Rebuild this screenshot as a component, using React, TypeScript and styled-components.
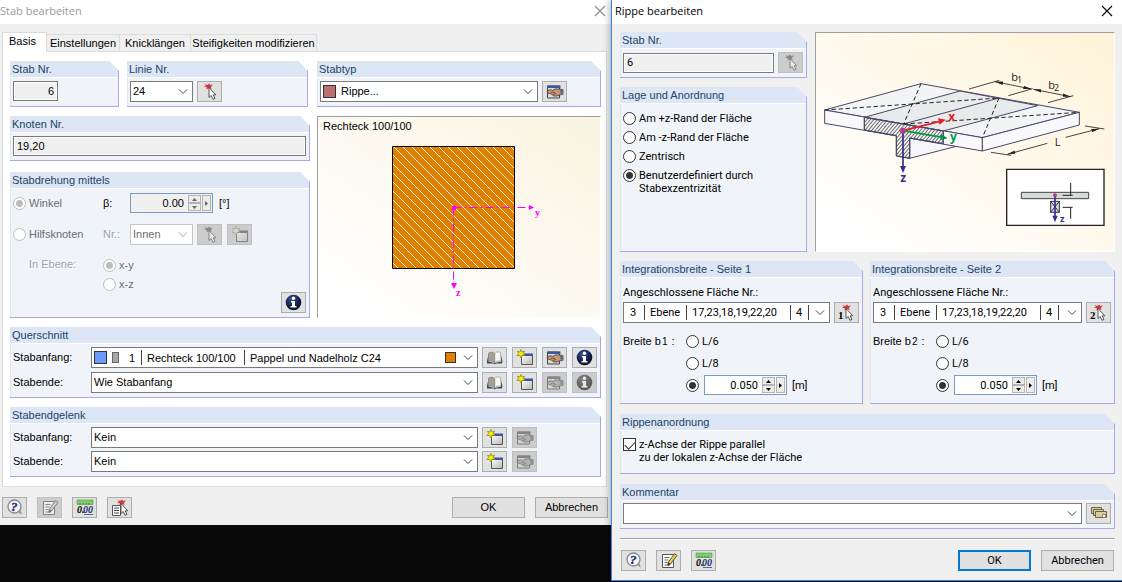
import React from "react";
import styled, { createGlobalStyle, css } from "styled-components";

const sans = `"Liberation Sans", Arial, sans-serif`;
const ui = `Roboto, Tahoma, sans-serif`;

const GlobalStyle = createGlobalStyle`
  * { box-sizing: border-box; }
  body { margin: 0; background: #0a0a0a; font: 11px/13px ${sans}; color: #000; }
  button, input, select { font: inherit; color: inherit; margin: 0; padding: 0; }
  h1, h2 { margin: 0; font: inherit; }
`;

/* ---------- windows ---------- */

const Desktop = styled.main`
  display: grid;
  grid-template-columns: 611fr 511fr;
  align-items: start;
  min-height: 100vh;
  overflow: hidden;
`;

const Window = styled.section<{ $active?: boolean }>`
  background: #f0f0f0;
  min-width: 0;
  ${p => p.$active && css`
    z-index: 1;
    border: solid #2f86dc;
    border-width: 0 0 1px 1px;
    box-shadow: 0 0 8px rgba(0, 0, 0, 0.4);
    font-family: ${ui};
  `}
`;

const TitleBar = styled.header<{ $active?: boolean }>`
  display: flex;
  align-items: center;
  justify-content: space-between;
  height: 24px;
  padding: 0 ${p => (p.$active ? 9 : 5)}px 3px ${p => (p.$active ? 3 : 0)}px;
  background: #fff;
  color: ${p => (p.$active ? "#000" : "#999")};
  font-family: "Open Sans", "Noto Sans", sans-serif;
`;

const CloseButton = styled.button`
  display: flex;
  border: 0;
  background: none;
`;

const Tabs = styled.nav`
  display: flex;
  align-items: flex-end;
  height: 27px;
  padding-left: 2px;
`;

const Tab = styled.button<{ $w: number; $current?: boolean }>`
  width: ${p => p.$w}px;
  height: 17px;
  border: 1px solid #dcdcdc;
  border-width: 1px 1px 0 0;
  background: #f0f0f0;
  white-space: nowrap;
  ${p => p.$current && css`
    height: 20px;
    margin-bottom: -1px;
    padding: 0 6px 2px;
    text-align: left;
    border-left-width: 1px;
    background: #fff;
  `}
`;

const TabPage = styled.div`
  margin: 0 4px 0 2px;
  padding: 9px 5px 9px 7px;
  border: 1px solid #dcdcdc;
  background: #fff;
  display: flex;
  flex-direction: column;
  gap: 9px;
`;

const Split = styled.div`
  display: grid;
  grid-template-columns: 300px 1fr;
  gap: 9px 7px;
`;

const Pair = styled.div`
  display: grid;
  grid-template-columns: 109fr 181fr;
  gap: 8px;
  padding-right: 2px;
`;

const Stack = styled.div<{ $gap?: number }>`
  display: flex;
  flex-direction: column;
  gap: ${p => p.$gap ?? 9}px;
  min-width: 0;
`;

const DialogBody = styled.div`
  display: flex;
  flex-direction: column;
  gap: 9px;
  padding: 8px 7px 9px 8px;
`;

const TopArea = styled.div`
  display: grid;
  grid-template-columns: 187px 1fr;
  gap: 8px;
`;

const Halves = styled.div`
  display: grid;
  grid-template-columns: 243fr 245fr;
  gap: 7px;
`;

const Footer = styled.footer<{ $ruled?: boolean }>`
  display: flex;
  gap: 10px;
  padding: 10px 3px 7px 2px;
  ${p => p.$ruled && css`
    padding: 11px 1px 0;
    border-top: 1px solid #a0a0a0;
    box-shadow: inset 0 1px #fff;
  `}
`;

const Push = styled.div`
  flex: 1;
`;

/* ---------- group boxes ---------- */

const GroupBox = styled.section<{ $fill?: boolean }>`
  display: flex;
  flex-direction: column;
  flex: ${p => (p.$fill ? 1 : "none")};
  min-width: 0;
  background: #f0f4f9;
  border: solid #a8a8ec;
  border-width: 0 1px 1px 0;
  clip-path: polygon(0 0, calc(100% - 10px) 0, 100% 10px, 100% 100%, 0 100%);
`;

const GroupTitle = styled.h2`
  height: 17px;
  padding: 2px 0 0 2px;
  background: #dce6f4;
  border-bottom: 1px solid #fff;
  color: #1e4468;
  font: 11px/13px ${sans};
`;

const GroupBody = styled.div<{ $top?: number; $gap?: number; $bottom?: number }>`
  flex: 1;
  display: flex;
  flex-direction: column;
  gap: ${p => p.$gap ?? 4}px;
  padding: ${p => p.$top ?? 3}px 3px ${p => p.$bottom ?? 4}px 2px;
  border-left: 1px solid #dce6f4;
`;

function Group(p: { title: string; top?: number; gap?: number; bottom?: number; fill?: boolean; children: React.ReactNode }) {
  return (
    <GroupBox $fill={p.fill}>
      <GroupTitle>{p.title}</GroupTitle>
      <GroupBody $top={p.top} $gap={p.gap} $bottom={p.bottom}>{p.children}</GroupBody>
    </GroupBox>
  );
}

/* ---------- controls ---------- */

const Row = styled.div<{ $gap?: number }>`
  display: flex;
  align-items: center;
  gap: ${p => p.$gap ?? 4}px;
  min-width: 0;
`;

const FieldLabel = styled.label<{ $w: number; $dim?: boolean }>`
  flex: none;
  width: ${p => p.$w}px;
  color: ${p => (p.$dim ? "#a0a0a0" : "#000")};
  text-shadow: ${p => (p.$dim ? "1px 1px #fff" : "none")};
`;

const Legend = styled.span`
  flex: none;
  font-family: ${sans};
`;

const PlaneLegend = styled.span`
  align-self: start;
  padding: 2px 0 0 16px;
  color: #a0a0a0;
  text-shadow: 1px 1px #fff;
`;

const Subscript = styled.small`
  font-size: 10px;
  margin: 0 1px;
`;

const TextField = styled.input<{ $w?: number; $right?: boolean }>`
  ${p => (p.$w ? `width: ${p.$w}px;` : "flex: 1; min-width: 0;")}
  height: 20px;
  padding: 0 3px;
  border: 1px solid #7a7a7a;
  border-radius: 0;
  background: #f0f0f0;
  box-shadow: inset 0 0 0 1px #fff;
  text-align: ${p => (p.$right ? "right" : "left")};
`;

const ComboFrame = styled.div<{ $w?: number; $off?: boolean }>`
  position: relative;
  display: flex;
  align-items: center;
  ${p => (p.$w ? `flex: none; width: ${p.$w}px;` : "flex: 1; min-width: 0;")}
  height: 21px;
  padding: 0 2px;
  border: 1px solid ${p => (p.$off ? "#c6c6c6" : "#7a7a7a")};
  background: #fff;
  color: ${p => (p.$off ? "#6d6d6d" : "#000")};
`;

const SelectField = styled.select`
  flex: 1;
  min-width: 0;
  width: 100%;
  height: 19px;
  border: 0;
  outline: 0;
  appearance: none;
  background: none;
  opacity: 1;
`;

const CoverSelect = styled.select`
  position: absolute;
  inset: 0;
  width: 100%;
  opacity: 0;
`;

const ChevronIcon = styled.svg`
  flex: none;
  width: 12px;
  height: 6px;
  margin: 0 1px 0 auto;
`;

const Swatch = styled.span<{ $color: string; $w?: number; $h?: number; $border?: string; $gap?: number }>`
  flex: none;
  width: ${p => p.$w ?? 13}px;
  height: ${p => p.$h ?? 13}px;
  border: 1px solid ${p => p.$border ?? "#333"};
  background: ${p => p.$color};
  margin-right: ${p => p.$gap ?? 5}px;
`;

const Cell = styled.span<{ $w: number; $last?: boolean; $pad?: number }>`
  flex: none;
  width: ${p => p.$w}px;
  height: 15px;
  line-height: 16px;
  padding-left: ${p => p.$pad ?? 5}px;
  white-space: nowrap;
  border-right: ${p => (p.$last ? 0 : "1px solid #444")};
`;

const Chevron = ({ off }: { off?: boolean }) => (
  <ChevronIcon viewBox="0 0 12 6" aria-hidden="true">
    <path d="M2 .5 6 4.500 10 .5" fill="none" stroke={off ? "#a0a0a0" : "#444"} />
  </ChevronIcon>
);

function Combo(p: { id: string; label: string; value: string; w?: number; off?: boolean; lead?: React.ReactNode }) {
  return (
    <ComboFrame $w={p.w} $off={p.off}>
      {p.lead}
      <SelectField id={p.id} aria-label={p.label} disabled={p.off}>
        <option>{p.value}</option>
      </SelectField>
      <Chevron off={p.off} />
    </ComboFrame>
  );
}

function ColumnCombo(p: { id: string; label: string; value: string; children: React.ReactNode }) {
  return (
    <ComboFrame>
      {p.children}
      <Chevron />
      <CoverSelect id={p.id} aria-label={p.label}>
        <option value={p.value} label={p.value} />
      </CoverSelect>
    </ComboFrame>
  );
}

const Choice = styled.label<{ $off?: boolean }>`
  display: flex;
  align-items: flex-start;
  flex: none;
  gap: 3px;
  color: ${p => (p.$off ? "#6d6d6d" : "#000")};
`;

const Radio = styled.input.attrs({ type: "radio" })`
  appearance: none;
  flex: none;
  width: 13px;
  height: 13px;
  border: 1px solid #333;
  border-radius: 50%;
  background: #fff;
  &:checked { background: radial-gradient(circle, #333 3px, #fff 4px); }
  &:disabled { border-color: #bcbcbc; }
  &:disabled:checked { background: radial-gradient(circle, #bcbcbc 3px, #fff 4px); }
`;

const Check = styled.input.attrs({ type: "checkbox" })`
  appearance: none;
  flex: none;
  display: grid;
  width: 13px;
  height: 13px;
  border: 1px solid #333;
  background: #fff;
  &:checked::before {
    content: "";
    width: 9px;
    height: 5px;
    margin: 2px 1px;
    border: solid #333;
    border-width: 0 0 1px 1px;
    transform: rotate(-45deg);
  }
`;

const IconButton = styled.button`
  flex: none;
  display: flex;
  align-items: center;
  justify-content: center;
  width: 25px;
  height: 21px;
  border: 1px solid #adadad;
  background: #e1e1e1;
  &:disabled { background: #ccc; border-color: #bfbfbf; }
  &:disabled svg { filter: grayscale(1); opacity: 0.6; }
`;

const PushButton = styled.button<{ $primary?: boolean }>`
  width: 73px;
  height: 21px;
  border: ${p => (p.$primary ? "2px solid #0078d7" : "1px solid #adadad")};
  background: #e1e1e1;
`;

const SpinFrame = styled.div<{ $w: number; $off?: boolean }>`
  flex: none;
  display: flex;
  align-items: stretch;
  width: ${p => p.$w}px;
  height: 20px;
  padding: 1px 0;
  border: 1px solid #7a9cc0;
  background: ${p => (p.$off ? "#f0f0f0" : "#fff")};
`;

const SpinInput = styled.input`
  flex: 1;
  min-width: 0;
  border: 0;
  outline: 0;
  padding-right: 4px;
  background: none;
  text-align: right;
`;

const SpinButtons = styled.div`
  display: grid;
  grid-template-rows: 1fr 1fr;
  width: 13px;
`;

const SpinButton = styled.button<{ $tall?: boolean }>`
  display: flex;
  align-items: center;
  justify-content: center;
  width: ${p => (p.$tall ? 9 : 13)}px;
  margin: 0 ${p => (p.$tall ? 1 : 0)}px;
  border: 1px solid #b4b4b4;
  background: #ececec;
`;

function Spin(p: { label: string; value: string; w: number; off?: boolean }) {
  const c = p.off ? "#666" : "#000";
  return (
    <SpinFrame $w={p.w} $off={p.off}>
      <SpinInput aria-label={p.label} defaultValue={p.value} />
      <SpinButtons>
        <SpinButton aria-label="Erhöhen"><svg width="5" height="3" viewBox="0 0 5 3"><path d="M0 3 2.5 0 5 3z" fill={c} /></svg></SpinButton>
        <SpinButton aria-label="Verringern"><svg width="5" height="3" viewBox="0 0 5 3"><path d="M0 0 2.5 3 5 0z" fill={c} /></svg></SpinButton>
      </SpinButtons>
      <SpinButton $tall aria-label="Mehr"><svg width="3" height="5" viewBox="0 0 3 5"><path d="M0 0 3 2.5 0 5z" fill={c} /></svg></SpinButton>
    </SpinFrame>
  );
}

const Actions = styled.div<{ $short?: boolean }>`
  display: flex;
  gap: 5px;
  width: ${p => (p.$short ? 55 : 115)}px;
  flex: none;
`;

const AngleGrid = styled.div`
  display: grid;
  grid-template-columns: 90px 27px 1fr;
  grid-template-rows: 20px 21px 35px;
  row-gap: 11px;
  align-items: center;
  margin-top: 1px;
`;

const PlaneChoices = styled.div`
  grid-column: 2 / 4;
  align-self: end;
  display: flex;
  flex-direction: column;
  gap: 6px;
`;

const BottomRight = styled.div`
  display: flex;
  justify-content: flex-end;
  margin-top: -3px;
`;

const WidthGrid = styled.div`
  display: grid;
  grid-template-columns: 63px 1fr;
  row-gap: 2px;
  align-items: center;
  margin-top: 5px;
`;

const WidthCell = styled.div`
  grid-column: 2;
  display: flex;
  align-items: center;
  gap: 5px;
  height: 20px;
`;

/* ---------- icons ---------- */

const Cross = ({ color }: { color: string }) => (
  <svg width="12" height="12" viewBox="0 0 12 12"><path d="M1 1 11 11M11 1 1 11" stroke={color} strokeWidth="1.1" /></svg>
);

const Arrow = () => (
  <path d="M7 3.500v10l2.200-2 1.800 3.800 2-.9-1.800-3.600h2.600z" fill="#fff" stroke="#444" strokeWidth=".9" />
);

const Star = () => (
  <path d="M2 .8 5 2 7.500.6 8 2 11 1.600 9 3.800 9.500 6 7 5 4.500 6.600 4.800 4.200 2 3.600 4 2.600z" fill="#cf3a3a" />
);

const PickIcon = ({ mark }: { mark?: string }) => (
  <svg width="18" height="18" viewBox="0 0 18 18">
    <g transform={mark ? "translate(2 0)" : "translate(1 0)"}><Star /></g>
    <g transform="translate(1 1)"><Arrow /></g>
    {mark && <text x="0" y="15" fontFamily="Liberation Serif" fontWeight="700" fontSize="11">{mark}</text>}
  </svg>
);

const ListPickIcon = () => (
  <svg width="18" height="18" viewBox="0 0 18 18">
    <path d="M1.500 6.500h8v10h-8z" fill="#fff" stroke="#555" />
    <path d="M3 9h5M3 11.500h5M3 14h5" stroke="#444" />
    <g transform="translate(4 0)"><Star /></g>
    <g transform="translate(3 1)"><Arrow /></g>
  </svg>
);

const EditIcon = () => (
  <svg width="18" height="16" viewBox="0 0 18 16">
    <path d="M1.500 2h12v12h-12z" fill="#dcdcdc" stroke="#444" />
    <path d="M1.500 1.500h13v2.500h-13z" fill="#3c56a4" />
    <path d="M1.500 7c2-1.500 3.500-1.500 5-.5L9 5h4l4 .5v5l-3 .3-3 1.200H7.500L5.500 10 3 9.500 1 8z" fill="#c89878" stroke="#4a3428" strokeWidth=".8" />
    <path d="M13.500 5H17v6h-2z" fill="#6a6a78" />
    <path d="M5 8.500 8 8l1.500 1.500M7 10.500 10 9.500" stroke="#5a3c2c" strokeWidth=".8" fill="none" />
  </svg>
);

const NewIcon = () => (
  <svg width="18" height="17" viewBox="0 0 18 17">
    <defs><linearGradient id="win" x1="0" y1="0" x2="1" y2="1"><stop offset="0" stopColor="#fff" /><stop offset="1" stopColor="#b8b8b8" /></linearGradient></defs>
    <path d="M5.500 5.500h11v10h-11z" fill="url(#win)" stroke="#555" />
    <path d="M5 4.500h12v2.500H5z" fill="#3a54a8" />
    <path d="M5 .5 6 3l2.500-.8L7.500 4.500 9 6.500l-2.800-.2L5 9 3.800 6.300 1 6.500l1.500-2L1.500 2.200 4 3z" fill="#f6f000" stroke="#857f10" strokeWidth=".7" />
  </svg>
);

const BookIcon = () => (
  <svg width="18" height="16" viewBox="0 0 18 16">
    <path d="M1 11 2.500 4v7.500L8.800 13l6.200-1.500L14.500 4 16.500 11 16 13.500H9.700l-.9 1-.9-1H1z" fill="#3d4660" />
    <path d="M2.500 11.500V3C5 1.500 7 2 8.800 3.500v9C6.500 10.800 4 10.500 2.500 11.500z" fill="#a89e98" stroke="#77706c" strokeWidth=".5" />
    <path d="M8.800 3.500c1.200-2 3.500-2 5.700-1l.7 9c-2-1-4.200-.8-6.400 1z" fill="#f8f7f4" stroke="#777" strokeWidth=".5" />
  </svg>
);

const InfoIcon = () => (
  <svg width="17" height="17" viewBox="0 0 17 17">
    <defs><radialGradient id="ball" cx=".4" cy=".3" r=".8"><stop offset="0" stopColor="#3e5590" /><stop offset=".6" stopColor="#101c48" /><stop offset="1" stopColor="#05091c" /></radialGradient></defs>
    <circle cx="8.500" cy="8.500" r="7.800" fill="url(#ball)" />
    <circle cx="8.500" cy="4.300" r="1.700" fill="#fff" />
    <path d="M6 7h4v5h1.500v1.500H5.500V12H7V8.500H6z" fill="#fff" />
  </svg>
);

const HelpIcon = () => (
  <svg width="18" height="17" viewBox="0 0 18 17">
    <circle cx="8.500" cy="7.500" r="6.500" fill="#f4f4f8" stroke="#85858e" strokeWidth="1.300" />
    <path d="M11 13 16 15.500 14 10z" fill="#999" />
    <text x="5" y="12" fontFamily="Liberation Serif" fontStyle="italic" fontWeight="700" fontSize="13" fill="#1f3470" stroke="#1f3470" strokeWidth=".4">?</text>
  </svg>
);

const NoteIcon = () => (
  <svg width="18" height="17" viewBox="0 0 18 17">
    <path d="M2.500 2.500h11v13h-11z" fill="#fff" stroke="#555" />
    <path d="M4.500 5.500h5M4.500 8h4M4.500 10.500h3M4.500 13h5" stroke="#666" />
    <path d="M14.500 1.500 17 3.500 10.500 12 8 13.500 8.300 10.300z" fill="#f0cc3c" stroke="#333" strokeWidth=".8" />
    <path d="M8.300 10.300 8 13.500 10.500 12z" fill="#222" />
  </svg>
);

const UnitsIcon = () => (
  <svg width="18" height="17" viewBox="0 0 18 17">
    <path d="M1 1h16v4.500H1z" fill="#7ccc6c" stroke="#4c9c44" strokeWidth=".6" />
    <path d="M4 5.500V4M7 5.500V4M10 5.500V4M13 5.500V4" stroke="#2c6c28" strokeWidth=".8" />
    <text x="1" y="14" fontFamily="Liberation Serif" fontStyle="italic" fontWeight="700" fontSize="10">0.</text>
    <text x="7" y="14" fontFamily="Liberation Serif" fontStyle="italic" fontWeight="700" fontSize="10" fill="#20306c">00</text>
    <path d="M8 15.500h9" stroke="#20306c" strokeWidth=".7" />
  </svg>
);

const CopiesIcon = () => (
  <svg width="18" height="15" viewBox="0 0 18 15" fill="#d8cc9c" stroke="#6c6444">
    <path d="M1.500 1.500h10v6h-10z" /><path d="M3.500 3.500h10v6h-10z" /><path d="M5.500 5.500h11v6h-11z" />
    <path d="M12.500 8.500h3v3h-3z" fill="#fff" strokeWidth=".7" />
  </svg>
);

/* ---------- drawings ---------- */

const Canvas = styled.figure<{ $to: string }>`
  margin: 0;
  min-width: 0;
  border: 1px solid;
  border-color: #a0a0a0 #fff #fff #a0a0a0;
  background: linear-gradient(to top right, #fff 10%, ${p => p.$to});
  svg { display: block; width: 100%; height: 100%; }
`;

const CrossSection = () => (
  <svg viewBox="0 0 282 200" preserveAspectRatio="xMinYMin meet" role="img" aria-label="Querschnitt Rechteck 100/100">
    <defs>
      <pattern id="hatch" width="9" height="9" patternUnits="userSpaceOnUse" x="1">
        <path d="M-1-1 10 10M-1 8 1 10M8-1 10 1" stroke="#fff3e0" />
      </pattern>
    </defs>
    <text x="5" y="13" fontFamily="Liberation Sans" fontSize="11">Rechteck 100/100</text>
    <path d="M74.500 29.500h122v122h-122z" fill="#e08000" />
    <path d="M74.500 29.500h122v122h-122z" fill="url(#hatch)" stroke="#000" />
    <g stroke="#f0f" fill="none" strokeDasharray="8 3 2 3"><path d="M135.500 90.500h77" /><path d="M135.500 90.500v76" /></g>
    <g fill="#f0f"><path d="M134 89h4v4h-4zM211 88l5 2.500-5 2.500zM133 166h6l-3 6z" />
      <text x="217" y="99" fontFamily="Liberation Serif" fontWeight="700" fontSize="10">y</text>
      <text x="138" y="179" fontFamily="Liberation Serif" fontWeight="700" fontSize="10">z</text>
    </g>
  </svg>
);

const RibDrawing = () => (
  <svg viewBox="18 99 894 651" preserveAspectRatio="xMinYMin meet" fill="none" strokeWidth="3" role="img" aria-label="Rippe mit mitwirkender Plattenbreite">
    <defs>
      <pattern id="cut" width="8" height="8" patternUnits="userSpaceOnUse" patternTransform="rotate(40)"><path d="M1 0v8" stroke="#222" strokeWidth="2" /></pattern>
      <marker id="tip" viewBox="0 0 24 12" refX="24" refY="6" markerUnits="userSpaceOnUse" markerWidth="24" markerHeight="12" orient="auto-start-reverse"><path d="M0 1 24 6 0 11z" fill="#222" /></marker>
    </defs>
    <g stroke="#4c4668">
      <path d="M299 410V475L435 440 400 420z" fill="#f6f6fa" />
      <path d="M44 330 333 251 808 337 517 413z" fill="#f3f4f6" />
      <path d="M163 352 450 273 683 317 400 393z" fill="#e8ebeb" />
      <path d="M281 372 567 294" />
      <path d="M44 330 517 413V453L44 370z" fill="#f9f9fc" />
      <path d="M517 413 808 337V375L517 453z" fill="#f9f9fc" />
      <path d="M163 352 400 393V431L299 414V475L259 468V407L163 390z" fill="#f0f0f0" />
      <path d="M163 352 400 393V431L299 414V475L259 468V407L163 390z" fill="url(#cut)" />
    </g>
    <path d="M44 330 567 294M333 251 281 372M281 372 808 337M567 294 517 413" stroke="#222" strokeDasharray="13 8" />
    <g stroke="#222" strokeWidth="2.500">
      <path d="M477 267 568 241M595 287 668 266M714 308 790 287M543 457 604 466M825 378 883 387" />
      <path d="M555 245 664 267" markerStart="url(#tip)" markerEnd="url(#tip)" />
      <path d="M670 268 782 290" markerStart="url(#tip)" markerEnd="url(#tip)" />
      <path d="M592 463 712 430" markerStart="url(#tip)" />
      <path d="M767 412 868 386" markerEnd="url(#tip)" />
    </g>
    <g fill="#222" fontFamily="Open Sans" fontSize="33">
      <text x="604" y="243">b</text><text x="621" y="249" fontSize="27">1</text>
      <text x="715" y="266">b</text><text x="732" y="272" fontSize="27">2</text>
      <text x="734" y="438">L</text>
    </g>
    <g strokeWidth="5">
      <path d="M279 392 390 364" stroke="#e81c24" /><path d="M384 355 407 359 389 374z" fill="#e81c24" />
      <path d="M279 392 398 412" stroke="#009848" /><path d="M393 402 413 415 391 421z" fill="#009848" />
      <path d="M279 392V502" stroke="#382c90" /><path d="M270 498H288L279 519z" fill="#382c90" />
    </g>
    <circle cx="279" cy="392" r="9" fill="#b83c88" />
    <g fontFamily="Open Sans" fontWeight="700" fontSize="36">
      <text x="415" y="362" fill="#e81c24">x</text><text x="420" y="423" fill="#009848">y</text><text x="271" y="546" fill="#382c90">z</text>
    </g>
    <path d="M590 508H882V676H590z" fill="#fff" stroke="#222" strokeWidth="4" />
    <path d="M634 577H836V596H634z" fill="#d6dada" stroke="#444" />
    <path d="M722 604H748V637H722zL748 637M748 604 722 637" fill="#d6dada" stroke="#333" />
    <path d="M782 549V586M758 586H788M758 622H788M782 622V656" stroke="#222" />
    <path d="M735 586V650" stroke="#382c90" strokeWidth="5" /><path d="M727 647H743L735 667z" fill="#382c90" />
    <circle cx="735" cy="586" r="6" fill="#b83c88" />
    <text x="750" y="665" fill="#382c90" fontFamily="Open Sans" fontWeight="700" fontSize="28">z</text>
  </svg>
);

/* ---------- dialogs ---------- */

function MemberDialog() {
  return (
    <Window>
      <TitleBar><h1>Stab bearbeiten</h1><CloseButton aria-label="Schließen"><Cross color="#8c8c8c" /></CloseButton></TitleBar>
      <Tabs>
        <Tab $w={45} $current>Basis</Tab><Tab $w={73}>Einstellungen</Tab><Tab $w={71}>Knicklängen</Tab><Tab $w={126}>Steifigkeiten modifizieren</Tab>
      </Tabs>
      <TabPage>
        <Split>
          <Pair>
            <Group title="Stab Nr."><Row><TextField aria-label="Stab Nr." $w={45} $right readOnly value="6" /></Row></Group>
            <Group title="Linie Nr.">
              <Row><Combo id="line" label="Linie Nr." value="24" w={63} /><IconButton aria-label="Linie wählen"><PickIcon /></IconButton></Row>
            </Group>
          </Pair>
          <Group title="Stabtyp">
            <Row>
              <Combo id="type" label="Stabtyp" value="Rippe..." lead={<Swatch $color="#bc7070" />} />
              <Actions $short><IconButton aria-label="Stabtyp bearbeiten"><EditIcon /></IconButton></Actions>
            </Row>
          </Group>
          <Stack $gap={11}>
            <Group title="Knoten Nr."><Row><TextField aria-label="Knoten Nr." readOnly value="19,20" /></Row></Group>
            <Group title="Stabdrehung mittels">
              <AngleGrid>
                <Choice $off><Radio name="rot" disabled defaultChecked />Winkel</Choice>
                <Legend>β:</Legend>
                <Row $gap={6}><Spin label="β" value="0.00" w={83} off /><Legend>[°]</Legend></Row>
                <Choice $off><Radio name="rot" disabled />Hilfsknoten</Choice>
                <FieldLabel $w={27} $dim htmlFor="aux">Nr.:</FieldLabel>
                <Row>
                  <Combo id="aux" label="Nr." value="Innen" w={63} off />
                  <Row $gap={5}>
                    <IconButton disabled aria-label="Knoten wählen"><PickIcon /></IconButton>
                    <IconButton disabled aria-label="Neuer Knoten"><NewIcon /></IconButton>
                  </Row>
                </Row>
                <PlaneLegend>In Ebene:</PlaneLegend>
                <PlaneChoices>
                  <Choice $off><Radio name="plane" disabled defaultChecked />x-y</Choice>
                  <Choice $off><Radio name="plane" disabled />x-z</Choice>
                </PlaneChoices>
              </AngleGrid>
              <BottomRight><IconButton aria-label="Info"><InfoIcon /></IconButton></BottomRight>
            </Group>
          </Stack>
          <Canvas $to="#faf3e0"><CrossSection /></Canvas>
        </Split>

        <Group title="Querschnitt">
          <Row>
            <FieldLabel $w={74} htmlFor="cs-start">Stabanfang:</FieldLabel>
            <ColumnCombo id="cs-start" label="Querschnitt Stabanfang" value="1">
              <Swatch $color="#6a9cff" /><Swatch $color="#a8a8a8" $border="#666" $w={7} $h={11} />
              <Cell $w={18}>1</Cell><Cell $w={103}>Rechteck 100/100</Cell><Cell $w={150} $last>Pappel und Nadelholz C24</Cell>
              <Push />
              <Swatch $color="#e08000" $w={11} $h={11} $gap={6} />
            </ColumnCombo>
            <Actions>
              <IconButton aria-label="Bibliothek"><BookIcon /></IconButton>
              <IconButton aria-label="Neu"><NewIcon /></IconButton>
              <IconButton aria-label="Bearbeiten"><EditIcon /></IconButton>
              <IconButton aria-label="Info"><InfoIcon /></IconButton>
            </Actions>
          </Row>
          <Row>
            <FieldLabel $w={74} htmlFor="cs-end">Stabende:</FieldLabel>
            <Combo id="cs-end" label="Querschnitt Stabende" value="Wie Stabanfang" />
            <Actions>
              <IconButton aria-label="Bibliothek"><BookIcon /></IconButton>
              <IconButton aria-label="Neu"><NewIcon /></IconButton>
              <IconButton disabled aria-label="Bearbeiten"><EditIcon /></IconButton>
              <IconButton disabled aria-label="Info"><InfoIcon /></IconButton>
            </Actions>
          </Row>
        </Group>

        <Group title="Stabendgelenk" gap={3}>
          {[["hinge-start", "Stabanfang:"], ["hinge-end", "Stabende:"]].map(([id, text]) => (
            <Row key={id}>
              <FieldLabel $w={74} htmlFor={id}>{text}</FieldLabel>
              <Combo id={id} label={text} value="Kein" />
              <Actions>
                <IconButton aria-label="Neu"><NewIcon /></IconButton>
                <IconButton disabled aria-label="Bearbeiten"><EditIcon /></IconButton>
              </Actions>
            </Row>
          ))}
        </Group>
      </TabPage>
      <Footer>
        <IconButton aria-label="Hilfe"><HelpIcon /></IconButton>
        <IconButton disabled aria-label="Kommentar"><NoteIcon /></IconButton>
        <IconButton aria-label="Einheiten"><UnitsIcon /></IconButton>
        <IconButton aria-label="Übernehmen"><ListPickIcon /></IconButton>
        <Push />
        <PushButton>OK</PushButton>
        <PushButton>Abbrechen</PushButton>
      </Footer>
    </Window>
  );
}

function WidthGroup({ side }: { side: string }) {
  const name = `width-${side}`;
  return (
    <Group title={`Integrationsbreite - Seite ${side}`} top={8} gap={3} bottom={8}>
      <label htmlFor={`face-${side}`}>Angeschlossene Fläche Nr.:</label>
      <Row>
        <ColumnCombo id={`face-${side}`} label={`Fläche Seite ${side}`} value="3">
          <Cell $w={19} $pad={4}>3</Cell><Cell $w={42}>Ebene</Cell><Cell $w={104}>17,23,18,19,22,20</Cell><Cell $w={18}>4</Cell>
        </ColumnCombo>
        <IconButton aria-label={`Fläche ${side} wählen`}><PickIcon mark={side} /></IconButton>
      </Row>
      <WidthGrid>
        <Legend>Breite b<Subscript>{side}</Subscript> :</Legend>
        <WidthCell><Choice><Radio name={name} />L/6</Choice></WidthCell>
        <WidthCell><Choice><Radio name={name} />L/8</Choice></WidthCell>
        <WidthCell>
          <Radio name={name} defaultChecked aria-label="Eigener Wert" />
          <Spin label={`Breite b${side}`} value="0.050" w={83} />
          <span>[m]</span>
        </WidthCell>
      </WidthGrid>
    </Group>
  );
}

function RibDialog() {
  return (
    <Window $active>
      <TitleBar $active><h1>Rippe bearbeiten</h1><CloseButton aria-label="Schließen"><Cross color="#000" /></CloseButton></TitleBar>
      <DialogBody>
        <TopArea>
          <Stack>
            <Group title="Stab Nr.">
              <Row><TextField aria-label="Stab Nr." readOnly value="6" /><IconButton disabled aria-label="Stab wählen"><PickIcon /></IconButton></Row>
            </Group>
            <Group title="Lage und Anordnung" top={8} gap={6} bottom={56} fill>
              <Choice><Radio name="pos" />Am +z-Rand der Fläche</Choice>
              <Choice><Radio name="pos" />Am -z-Rand der Fläche</Choice>
              <Choice><Radio name="pos" />Zentrisch</Choice>
              <Choice><Radio name="pos" defaultChecked /><span>Benutzerdefiniert durch<br />Stabexzentrizität</span></Choice>
            </Group>
          </Stack>
          <Canvas $to="#fff3d8"><RibDrawing /></Canvas>
        </TopArea>
        <Stack $gap={10}>
          <Halves><WidthGroup side="1" /><WidthGroup side="2" /></Halves>
          <Group title="Rippenanordnung" top={7} bottom={9}>
            <Choice><Check defaultChecked /><span>z-Achse der Rippe parallel<br />zu der lokalen z-Achse der Fläche</span></Choice>
          </Group>
          <Group title="Kommentar" top={2}>
            <Row><Combo id="comment" label="Kommentar" value="" /><IconButton aria-label="Kommentare"><CopiesIcon /></IconButton></Row>
          </Group>
        </Stack>
        <Footer $ruled>
          <IconButton aria-label="Hilfe"><HelpIcon /></IconButton>
          <IconButton aria-label="Kommentar"><NoteIcon /></IconButton>
          <IconButton aria-label="Einheiten"><UnitsIcon /></IconButton>
          <Push />
          <PushButton $primary>OK</PushButton>
          <PushButton>Abbrechen</PushButton>
        </Footer>
      </DialogBody>
    </Window>
  );
}

export default function App() {
  return (
    <>
      <GlobalStyle />
      <Desktop>
        <MemberDialog />
        <RibDialog />
      </Desktop>
    </>
  );
}
